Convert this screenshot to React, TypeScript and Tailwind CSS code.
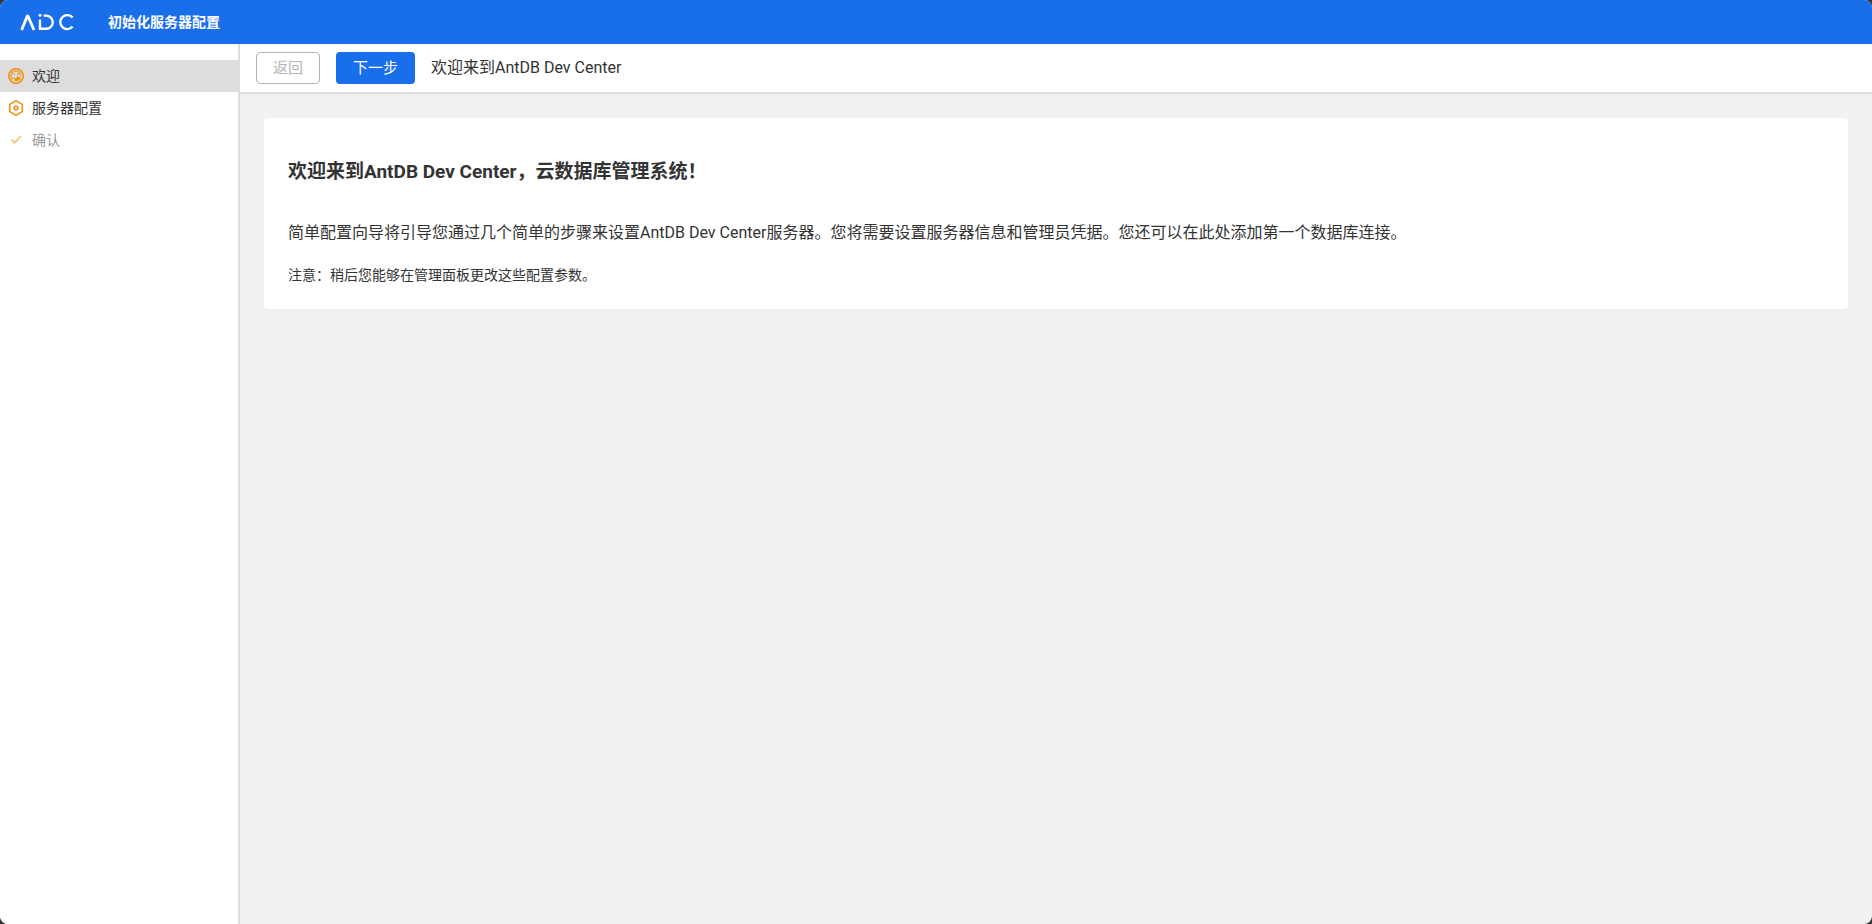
import React from 'react';
import clsx from 'clsx';

function Logo() {
  return (
    <svg className="h-[18px] w-14" viewBox="0 0 56 18" fill="none" stroke="#fff" strokeWidth="2.4" role="img" aria-label="ADC">
      <path d="M1.6 17 7.6 2.4 14 17" strokeWidth="2.8" strokeLinejoin="bevel" />
      <path d="M20 6.6v9.2h6.2a6.6 6.6 0 0 0 0-13.2H23.6" />
      <circle cx="20" cy="2.2" r="1.5" fill="#fff" stroke="none" />
      <path d="M52.6 4.6A7 7 0 1 0 52.6 13.6" />
    </svg>
  );
}

function WelcomeIcon() {
  return (
    <svg className="size-4" viewBox="0 0 16 16" fill="none" stroke="#f0900f">
      <circle cx="8" cy="8" r="7.2" strokeWidth="1.6" />
      <path d="M4.4 11.4A4.9 4.9 0 1 1 12.8 8" strokeWidth="1.3" strokeDasharray="2.6 .5" />
      <path d="M5 6.8 6.6 6M9.2 5.6l1.6.8M4.6 9.4l1 .6" strokeWidth="1.2" />
      <path d="M6.4 13V9.6l1.7.8 1-2.4 1.2 1.2 2.3-.8-.4 3-2.4 1.6z" fill="#f0900f" stroke="none" />
    </svg>
  );
}

function ServerIcon() {
  return (
    <svg className="size-4" viewBox="0 0 16 16" fill="none" stroke="#f0900f" strokeWidth="1.6" strokeLinejoin="round">
      <path d="M8 .9 14.3 4.4v7.2L8 15.1 1.7 11.6V4.4z" />
      <circle cx="8" cy="8" r="1.8" />
    </svg>
  );
}

function ConfirmIcon() {
  return (
    <svg className="size-4" viewBox="0 0 16 16" fill="none" stroke="#f0900f" strokeWidth="1.8">
      <path d="m3.2 7.4 3.3 3.3L13 4.1" />
    </svg>
  );
}

const steps = [
  { label: '欢迎', icon: WelcomeIcon, active: true, disabled: false },
  { label: '服务器配置', icon: ServerIcon, active: false, disabled: false },
  { label: '确认', icon: ConfirmIcon, active: false, disabled: true },
];

export default function App() {
  return (
    <div className="h-screen bg-[#333] font-[Roboto,'Noto_Sans_CJK_SC',sans-serif] text-[#333]">
      <div className="flex h-full flex-col overflow-hidden rounded-lg bg-[#f1f1f1]">
        {/* App bar */}
        <header className="flex h-11 shrink-0 items-center gap-8 bg-[#196eea] px-5 pb-px text-white">
          <Logo />
          <h1 className="text-sm font-bold">初始化服务器配置</h1>
        </header>

        <div className="flex min-h-0 flex-1">
          {/* Wizard steps */}
          <nav className="w-60 shrink-0 border-r-2 border-[#ddd] bg-white pt-4">
            {steps.map(step => {
              const Icon = step.icon;
              return (
                <button
                  key={step.label}
                  disabled={step.disabled}
                  className={clsx(
                    'flex h-8 w-full items-center gap-2 px-2 text-left text-sm',
                    step.active && 'bg-[#ddd]',
                    step.disabled && 'opacity-50',
                  )}
                >
                  <Icon />
                  <span>{step.label}</span>
                </button>
              );
            })}
          </nav>

          <main className="min-w-0 flex-1 overflow-auto">
            {/* Toolbar */}
            <div className="flex items-center gap-4 border-b-2 border-[#ddd] bg-white px-4 py-2">
              <button
                disabled
                className="h-8 w-16 rounded border border-[#b5b5b5] text-[15px] leading-5 text-[#b5b5b5]"
              >
                返回
              </button>
              <button className="h-8 rounded bg-[#196eea] px-[17px] text-[15px] leading-5 text-white">下一步</button>
              <span className="text-base">欢迎来到AntDB Dev Center</span>
            </div>

            {/* Welcome card */}
            <section className="m-6 rounded bg-white px-6 pt-10 pb-6">
              <h3 className="text-[19px] leading-7 font-bold">欢迎来到AntDB Dev Center，云数据库管理系统！</h3>
              <p className="mt-[35px] text-base leading-6">
                简单配置向导将引导您通过几个简单的步骤来设置AntDB Dev Center服务器。您将需要设置服务器信息和管理员凭据。您还可以在此处添加第一个数据库连接。
              </p>
              <p className="mt-5 text-sm leading-5">注意：稍后您能够在管理面板更改这些配置参数。</p>
            </section>
          </main>
        </div>
      </div>
    </div>
  );
}
